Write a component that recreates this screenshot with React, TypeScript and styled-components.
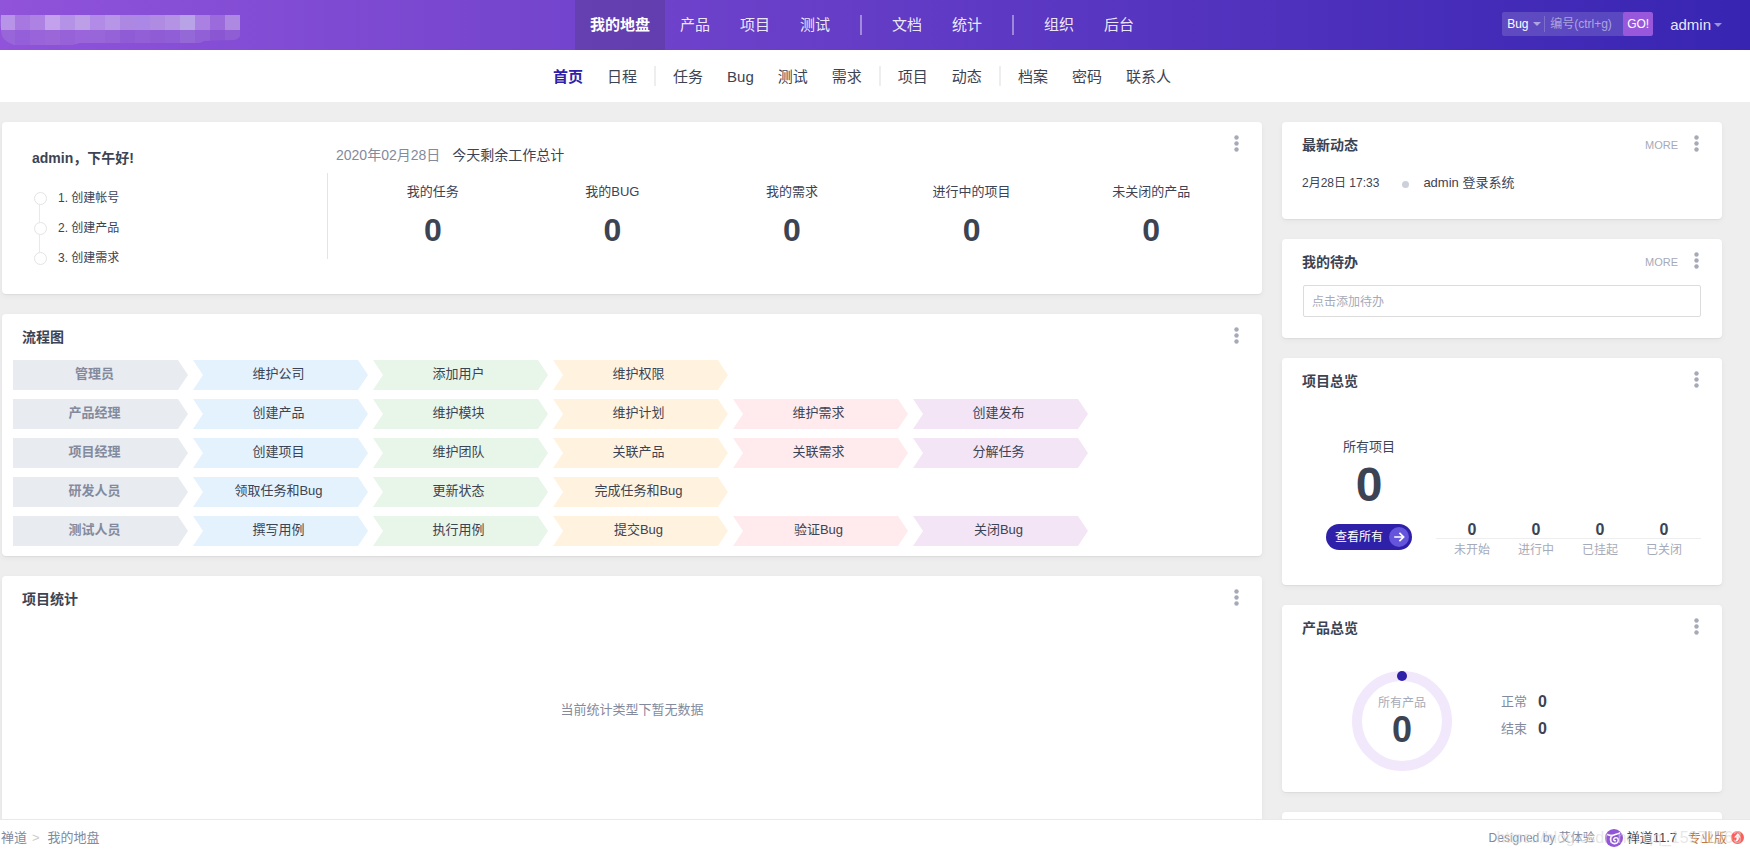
import React from 'react';
import styled, { createGlobalStyle } from 'styled-components';

const c = {
  text: '#3c4353',
  muted: '#838a9d',
  faint: '#a6aab8',
  line: '#eeeeee',
  primary: '#2e20a9',
  accent: '#9958dc',
};

const GlobalStyle = createGlobalStyle`
  * { box-sizing: border-box; }
  body {
    margin: 0;
    background: #eeeeee;
    color: ${c.text};
    font-family: "Liberation Sans", "Noto Sans CJK SC", sans-serif;
    font-size: 13px;
    line-height: 20px;
  }
  a { color: inherit; text-decoration: none; }
  button, input, select { font: inherit; color: inherit; border: 0; padding: 0; margin: 0; background: none; }
  button { cursor: pointer; }
  h1, h2, p, ul, ol, dl, dt, dd { margin: 0; padding: 0; list-style: none; font-weight: normal; font-size: inherit; }
`;

const Shell = styled.div`
  display: flex;
  flex-direction: column;
  height: 100vh;
  overflow: hidden;
`;

/* ---------- top bars ---------- */

const TopBar = styled.header`
  display: grid;
  grid-template-columns: 1fr auto 1fr;
  align-items: center;
  height: 50px;
  flex: none;
  padding: 0 28px 0 0;
  background: linear-gradient(to right, #9053da, #3725b2);
  color: #fff;
`;

const LogoLink = styled.a`
  display: block;
  width: 240px;
  height: 50px;
  svg { display: block; }
`;

const MainNav = styled.nav`
  display: flex;
  align-items: center;
  padding-left: 2px;
`;

const MainLink = styled.a<{ $active?: boolean }>`
  padding: 0 15px;
  font-size: 15px;
  line-height: 50px;
  font-weight: ${p => (p.$active ? 'bold' : 'normal')};
  background: ${p => (p.$active ? 'rgba(60, 50, 90, 0.25)' : 'transparent')};
  color: ${p => (p.$active ? '#fff' : 'rgba(255, 255, 255, 0.9)')};
`;

const MainDivider = styled.span`
  width: 2px;
  height: 20px;
  margin: 0 15px;
  background: rgba(255, 255, 255, 0.4);
`;

const Tools = styled.div`
  display: flex;
  justify-content: flex-end;
  align-items: center;
  gap: 17px;
`;

const SearchForm = styled.form`
  display: flex;
  align-items: center;
  height: 24px;
  margin-bottom: 2px;
  border-radius: 2px;
  background: rgba(255, 255, 255, 0.15);
  font-size: 12px;
  overflow: hidden;
`;

const TypeField = styled.label`
  display: flex;
  align-items: center;
  width: 43px;
  height: 16px;
  padding: 0 3px 0 5px;
  border-right: 1px solid rgba(255, 255, 255, 0.2);
`;

const TypeSelect = styled.select`
  flex: 1;
  min-width: 0;
  appearance: none;
  color: #fff;
  outline: none;
  option { color: ${c.text}; }
`;

const CodeInput = styled.input`
  width: 78px;
  height: 24px;
  padding-left: 5px;
  outline: none;
  &::placeholder { color: rgba(255, 255, 255, 0.5); opacity: 1; }
`;

const GoButton = styled.button`
  width: 30px;
  height: 24px;
  border-radius: 2px;
  background: ${c.accent};
  color: #fff;
`;

const Caret = styled.span`
  flex: none;
  border: 4px solid transparent;
  border-top-color: rgba(255, 255, 255, 0.5);
  border-bottom: 0;
`;

const UserButton = styled.button`
  display: flex;
  align-items: center;
  gap: 3px;
  font-size: 15px;
  color: rgba(255, 255, 255, 0.9);
`;

const SubNav = styled.nav`
  display: flex;
  justify-content: center;
  align-items: center;
  flex: none;
  height: 52px;
  padding: 0 28px 0 2px;
  background: #fff;
  font-size: 15px;
`;

const SubLink = styled.a<{ $active?: boolean }>`
  padding: 2px 12px 0;
  font-weight: ${p => (p.$active ? 'bold' : 'normal')};
  color: ${p => (p.$active ? c.primary : c.text)};
`;

const SubDivider = styled.span`
  width: 2px;
  height: 20px;
  margin: 0 5px;
  background: ${c.line};
`;

/* ---------- page and cards ---------- */

const Main = styled.main`
  flex: 1;
  min-height: 0;
  display: grid;
  grid-template-columns: minmax(0, 1fr) 440px;
  align-items: start;
  gap: 20px;
  padding: 20px 28px 20px 2px;
  overflow-y: auto;
  scrollbar-width: none;
`;

const Column = styled.div`
  display: flex;
  flex-direction: column;
  gap: 20px;
`;

const Card = styled.section`
  border-radius: 4px;
  background: #fff;
  box-shadow: 0 1px 1px rgba(0, 0, 0, 0.05), 0 2px 6px rgba(0, 0, 0, 0.045);
`;

const UpcomingCard = styled(Card)`
  min-height: 120px;
`;

const CardHeader = styled.header`
  display: flex;
  align-items: center;
  height: 46px;
  padding: 0 18px 0 20px;
`;

const CardTitle = styled.h2`
  flex: 1;
  font-size: 14px;
  font-weight: bold;
`;

const MoreLink = styled.a`
  margin-right: 11px;
  font-size: 11px;
  color: ${c.faint};
`;

const KebabButton = styled.button`
  width: 15px;
  height: 43px;
  align-self: flex-start;
  svg { display: block; margin: 0 auto; }
`;

/* ---------- greeting ---------- */

const Welcome = styled(Card)`
  display: flex;
`;

const Greeting = styled.div`
  width: 325px;
  padding: 26px 30px 21px;
`;

const GreetingTitle = styled.h1`
  margin-bottom: 15px;
  font-size: 14px;
  font-weight: bold;
`;

const Steps = styled.ol`
  margin-left: 2px;
  font-size: 12px;
`;

const Step = styled.li`
  position: relative;
  display: flex;
  align-items: center;
  gap: 11px;
  height: 30px;
  &::before {
    content: '';
    width: 11px;
    height: 11px;
    border: 1px solid #e4e4e4;
    border-radius: 50%;
  }
  &:not(:last-child)::after {
    content: '';
    position: absolute;
    left: 5px;
    top: 21px;
    width: 1px;
    height: 18px;
    background: #e9e9e9;
  }
`;

const Summary = styled.div`
  flex: 1;
  min-width: 0;
`;

const SummaryHead = styled.div`
  display: flex;
  align-items: flex-end;
  gap: 12px;
  height: 43px;
  padding: 0 18px 0 9px;
  font-size: 14px;
`;

const SummaryDate = styled.time`
  color: ${c.muted};
`;

const SummaryTitle = styled.span`
  flex: 1;
`;

const Tiles = styled.dl`
  display: flex;
  margin-top: 8px;
  padding: 9px 21px 9px 15px;
  border-left: 1px solid #e4e4e4;
`;

const Tile = styled.div`
  flex: 1;
  text-align: center;
`;

const TileValue = styled.dd`
  margin-top: 8px;
  font-size: 32px;
  line-height: 40px;
  font-weight: bold;
`;

/* ---------- flow chart ---------- */

const Flow = styled.div`
  display: grid;
  gap: 9px;
  padding: 0 11px 10px;
`;

const FlowRow = styled.div`
  display: grid;
  grid-template-columns: repeat(6, minmax(0, 175px));
  gap: 5px;
`;

const stageColors = ['#e3f2fd', '#e8f5e9', '#fff3e0', '#ffebee', '#f3e5f5'];

const Role = styled.span`
  height: 30px;
  padding-right: 12px;
  line-height: 28px;
  text-align: center;
  font-weight: bold;
  color: ${c.muted};
  background: #e8ebf0;
  clip-path: polygon(0 0, calc(100% - 10px) 0, 100% 50%, calc(100% - 10px) 100%, 0 100%);
`;

const Stage = styled.a<{ $index: number }>`
  height: 30px;
  padding-right: 4px;
  line-height: 28px;
  text-align: center;
  background: ${p => stageColors[p.$index]};
  clip-path: polygon(0 0, calc(100% - 10px) 0, 100% 50%, calc(100% - 10px) 100%, 0 100%, 10px 50%);
`;

const EmptyNote = styled.p`
  padding: 78px 20px 140px;
  text-align: center;
  color: ${c.muted};
`;

/* ---------- side cards ---------- */

const LogRow = styled.div`
  display: flex;
  align-items: center;
  padding: 5px 20px 26px;
`;

const LogTime = styled.time`
  font-size: 12px;
`;

const LogDot = styled.span`
  width: 7px;
  height: 7px;
  margin: 2px 14px 0 23px;
  border-radius: 50%;
  background: #cbd0db;
`;

const TodoField = styled.label`
  display: block;
  padding: 0 21px 21px;
`;

const TodoInput = styled.input`
  display: block;
  width: 100%;
  height: 32px;
  padding: 2px 8px 0;
  border: 1px solid #dcdcdc;
  border-radius: 2px;
  font-size: 12px;
  outline: none;
  &::placeholder { color: ${c.faint}; opacity: 1; }
`;

const ProjectBody = styled.div`
  display: flex;
  align-items: flex-end;
  padding: 33px 21px 25px 20px;
`;

const ProjectTotal = styled.div`
  display: flex;
  flex-direction: column;
  align-items: center;
  width: 134px;
  margin-bottom: 10px;
`;

const ProjectCount = styled.strong`
  margin: 4px 0 15px;
  font-size: 48px;
  line-height: 48px;
`;

const ViewAll = styled.button`
  display: flex;
  align-items: center;
  justify-content: space-between;
  width: 86px;
  height: 26px;
  padding: 0 3px 0 9px;
  border-radius: 13px;
  background: ${c.primary};
  color: #fff;
  font-size: 12px;
`;

const StateList = styled.dl`
  flex: 1;
  display: flex;
  padding: 0 5px 0 4px;
  background: linear-gradient(${c.line}, ${c.line}) 0 16px / 100% 1px no-repeat;
`;

const StateItem = styled.div`
  flex: 1;
  display: flex;
  flex-direction: column-reverse;
  text-align: center;
`;

const StateName = styled.dt`
  padding-top: 2px;
  font-size: 12px;
  color: ${c.faint};
`;

const StateValue = styled.dd`
  font-size: 16px;
  line-height: 16px;
  font-weight: bold;
`;

const ProductBody = styled.div`
  display: flex;
  align-items: flex-start;
  gap: 49px;
  padding: 20px 20px 21px 70px;
`;

const Ring = styled.div`
  display: grid;
  width: 100px;
  height: 100px;
  > * { grid-area: 1 / 1; }
`;

const RingLabel = styled.div`
  display: flex;
  flex-direction: column;
  align-items: center;
  padding-top: 22px;
  font-size: 12px;
  color: ${c.faint};
`;

const RingCount = styled.strong`
  font-size: 36px;
  line-height: 34px;
  color: ${c.text};
`;

const Legend = styled.dl`
  padding-top: 17px;
`;

const LegendRow = styled.div`
  display: flex;
  align-items: center;
  gap: 11px;
  height: 27px;
  color: ${c.muted};
`;

const LegendValue = styled.dd`
  font-size: 16px;
  font-weight: bold;
  color: ${c.text};
`;

/* ---------- footer ---------- */

const Footer = styled.footer`
  position: relative;
  flex: none;
  display: flex;
  align-items: center;
  justify-content: space-between;
  height: 36px;
  padding: 0 6px 0 1px;
  border-top: 1px solid #e9e9e9;
  background: #fff;
`;

const Crumbs = styled.nav`
  display: flex;
  gap: 5px;
  color: ${c.muted};
`;

const CrumbMark = styled.span`
  margin-right: 3px;
  color: #cccccc;
`;

const Credits = styled.div`
  display: flex;
  align-items: center;
`;

const Designer = styled.a`
  margin-right: 10px;
  font-size: 12px;
  color: ${c.muted};
`;

const Version = styled.a`
  display: flex;
  align-items: center;
  gap: 4px;
  margin-right: 11px;
`;

const ProLink = styled.a`
  display: flex;
  align-items: center;
  gap: 4px;
  color: #c07a3c;
`;

const Watermark = styled.span`
  position: absolute;
  right: 8px;
  bottom: 7px;
  font-size: 16px;
  color: rgba(215, 215, 215, 0.6);
  pointer-events: none;
`;

/* ---------- drawings ---------- */

const mosaicTop = ['#b794e8', '#a678e0', '#ad82e3', '#c3a1ec', '#b493e6', '#bd9fe8', '#b18be5', '#b796e7', '#ad88e2', '#ab88e6', '#af8ce2', '#b593e4', '#b8a3e6', '#aa80e2', '#9b6adb', '#ae89e2'];
const mosaicBottom = ['#9966da', '#945fd8', '#9964da', '#9a66d8', '#9761d8', '#9a64da', '#9866d8', '#9662d8', '#905cd6', '#925fd6', '#905cd5', '#905ed6', '#9468d6', '#9160d6', '#8a56d2', '#8f5dd4'];

const Mosaic = () => (
  <svg width="240" height="50" viewBox="0 0 240 50" aria-hidden="true">
    <clipPath id="blob">
      <path d="M1 13H240V36Q239 39 234 40L204 41L200 43H80L66 47H38L26 45L14 45Q5 42 2 36Q0 28 1 13Z" />
    </clipPath>
    <g clipPath="url(#blob)">
      {mosaicBottom.map((fill, i) => <rect key={i} x={i * 15} y="30" width="15" height="15" fill={fill} />)}
      {mosaicTop.map((fill, i) => <rect key={i} x={i * 15} y="15" width="15" height="15" fill={fill} />)}
    </g>
  </svg>
);

const Kebab = () => (
  <KebabButton type="button" aria-label="更多操作">
    <svg width="5" height="17" viewBox="0 0 5 17" fill={c.faint}>
      <circle cx="2.5" cy="2.5" r="2.2" />
      <circle cx="2.5" cy="8.5" r="2.2" />
      <circle cx="2.5" cy="14.5" r="2.2" />
    </svg>
  </KebabButton>
);

const ArrowDisc = () => (
  <svg width="20" height="20" viewBox="0 0 20 20" fill="none">
    <circle cx="10" cy="10" r="10" fill="#6554dc" />
    <path d="M5.2 10H14.2M10.4 5.8L14.6 10L10.4 14.2" stroke="#fff" strokeWidth="1.7" />
  </svg>
);

const ZenIcon = () => (
  <svg width="18" height="18" viewBox="0 0 18 18" fill="none">
    <circle cx="9" cy="9" r="9" fill="#9055d8" />
    <path d="M2.6 5.4C4 6.4 5.6 6.6 7 6.3M14.8 3.8C12.6 5.2 9.6 5.2 7.4 6.6C4.2 8.8 5 14.6 9.4 14.8C13 14.8 14 11.4 12.8 9.4C11.6 8.2 9.6 8.6 8.8 9.8C8.4 11 9.2 12 10.4 11.6" stroke="#fff" strokeWidth="1.4" strokeLinecap="round" />
  </svg>
);

const ProIcon = () => (
  <svg width="13" height="13" viewBox="0 0 13 13">
    <circle cx="6.5" cy="6.5" r="6.5" fill="#ff5d5d" />
    <path d="M6.9 2L3 6.6H5.6V7.6C5.6 8.9 5 9.6 4 10.2C6.4 10.4 7.8 9.4 7.8 7.4V6.6H10Z" fill="#fff" />
  </svg>
);

/* ---------- data ---------- */

const mainMenu = [['我的地盘', '产品', '项目', '测试'], ['文档', '统计'], ['组织', '后台']];
const subMenu = [['首页', '日程'], ['任务', 'Bug', '测试', '需求'], ['项目', '动态'], ['档案', '密码', '联系人']];
const tiles = ['我的任务', '我的BUG', '我的需求', '进行中的项目', '未关闭的产品'];
const flows = [
  { role: '管理员', stages: ['维护公司', '添加用户', '维护权限'] },
  { role: '产品经理', stages: ['创建产品', '维护模块', '维护计划', '维护需求', '创建发布'] },
  { role: '项目经理', stages: ['创建项目', '维护团队', '关联产品', '关联需求', '分解任务'] },
  { role: '研发人员', stages: ['领取任务和Bug', '更新状态', '完成任务和Bug'] },
  { role: '测试人员', stages: ['撰写用例', '执行用例', '提交Bug', '验证Bug', '关闭Bug'] },
];

const Header = ({ title, more }: { title: string; more?: boolean }) => (
  <CardHeader>
    <CardTitle>{title}</CardTitle>
    {more && <MoreLink href="#">MORE</MoreLink>}
    <Kebab />
  </CardHeader>
);

export default function App() {
  return (
    <Shell>
      <GlobalStyle />
      <TopBar>
        <LogoLink href="#" aria-label="公司"><Mosaic /></LogoLink>
        <MainNav>
          {mainMenu.map((group, g) => (
            <React.Fragment key={g}>
              {g > 0 && <MainDivider />}
              {group.map(item => <MainLink key={item} href="#" $active={item === '我的地盘'}>{item}</MainLink>)}
            </React.Fragment>
          ))}
        </MainNav>
        <Tools>
          <SearchForm onSubmit={e => e.preventDefault()}>
            <TypeField>
              <TypeSelect aria-label="搜索类型"><option>Bug</option></TypeSelect>
              <Caret />
            </TypeField>
            <CodeInput aria-label="编号" placeholder="编号(ctrl+g)" />
            <GoButton type="submit">GO!</GoButton>
          </SearchForm>
          <UserButton type="button">admin<Caret /></UserButton>
        </Tools>
      </TopBar>
      <SubNav>
        {subMenu.map((group, g) => (
          <React.Fragment key={g}>
            {g > 0 && <SubDivider />}
            {group.map(item => <SubLink key={item} href="#" $active={item === '首页'}>{item}</SubLink>)}
          </React.Fragment>
        ))}
      </SubNav>

      <Main>
        <Column>
          <Welcome>
            <Greeting>
              <GreetingTitle>admin，下午好!</GreetingTitle>
              <Steps>
                <Step><a href="#">1. 创建帐号</a></Step>
                <Step><a href="#">2. 创建产品</a></Step>
                <Step><a href="#">3. 创建需求</a></Step>
              </Steps>
            </Greeting>
            <Summary>
              <SummaryHead>
                <SummaryDate>2020年02月28日</SummaryDate>
                <SummaryTitle>今天剩余工作总计</SummaryTitle>
                <Kebab />
              </SummaryHead>
              <Tiles>
                {tiles.map(name => (
                  <Tile key={name}>
                    <dt>{name}</dt>
                    <TileValue>0</TileValue>
                  </Tile>
                ))}
              </Tiles>
            </Summary>
          </Welcome>

          <Card>
            <Header title="流程图" />
            <Flow>
              {flows.map(flow => (
                <FlowRow key={flow.role}>
                  <Role>{flow.role}</Role>
                  {flow.stages.map((stage, i) => <Stage key={stage} href="#" $index={i}>{stage}</Stage>)}
                </FlowRow>
              ))}
            </Flow>
          </Card>

          <Card>
            <Header title="项目统计" />
            <EmptyNote>当前统计类型下暂无数据</EmptyNote>
          </Card>
        </Column>

        <Column>
          <Card>
            <Header title="最新动态" more />
            <LogRow>
              <LogTime>2月28日 17:33</LogTime>
              <LogDot />
              <span>admin 登录系统</span>
            </LogRow>
          </Card>

          <Card>
            <Header title="我的待办" more />
            <TodoField>
              <TodoInput aria-label="添加待办" placeholder="点击添加待办" />
            </TodoField>
          </Card>

          <Card>
            <Header title="项目总览" />
            <ProjectBody>
              <ProjectTotal>
                <span>所有项目</span>
                <ProjectCount>0</ProjectCount>
                <ViewAll type="button">查看所有<ArrowDisc /></ViewAll>
              </ProjectTotal>
              <StateList>
                {['未开始', '进行中', '已挂起', '已关闭'].map(name => (
                  <StateItem key={name}>
                    <StateName>{name}</StateName>
                    <StateValue>0</StateValue>
                  </StateItem>
                ))}
              </StateList>
            </ProjectBody>
          </Card>

          <Card>
            <Header title="产品总览" />
            <ProductBody>
              <Ring>
                <svg width="100" height="100" viewBox="0 0 100 100" fill="none">
                  <circle cx="50" cy="50" r="45" stroke="#f1e8fc" strokeWidth="10" />
                  <circle cx="50" cy="5" r="5" fill={c.primary} />
                </svg>
                <RingLabel>
                  所有产品
                  <RingCount>0</RingCount>
                </RingLabel>
              </Ring>
              <Legend>
                <LegendRow><dt>正常</dt><LegendValue>0</LegendValue></LegendRow>
                <LegendRow><dt>结束</dt><LegendValue>0</LegendValue></LegendRow>
              </Legend>
            </ProductBody>
          </Card>

          <UpcomingCard />
        </Column>
      </Main>

      <Footer>
        <Crumbs>
          <a href="#">禅道</a>
          <CrumbMark>&gt;</CrumbMark>
          <a href="#">我的地盘</a>
        </Crumbs>
        <Credits>
          <Designer href="#">Designed by 艾体验</Designer>
          <Version href="#"><ZenIcon />禅道11.7</Version>
          <ProLink href="#">专业版<ProIcon /></ProLink>
        </Credits>
        <Watermark>https://blog.csdn.net/qq_15971263</Watermark>
      </Footer>
    </Shell>
  );
}
